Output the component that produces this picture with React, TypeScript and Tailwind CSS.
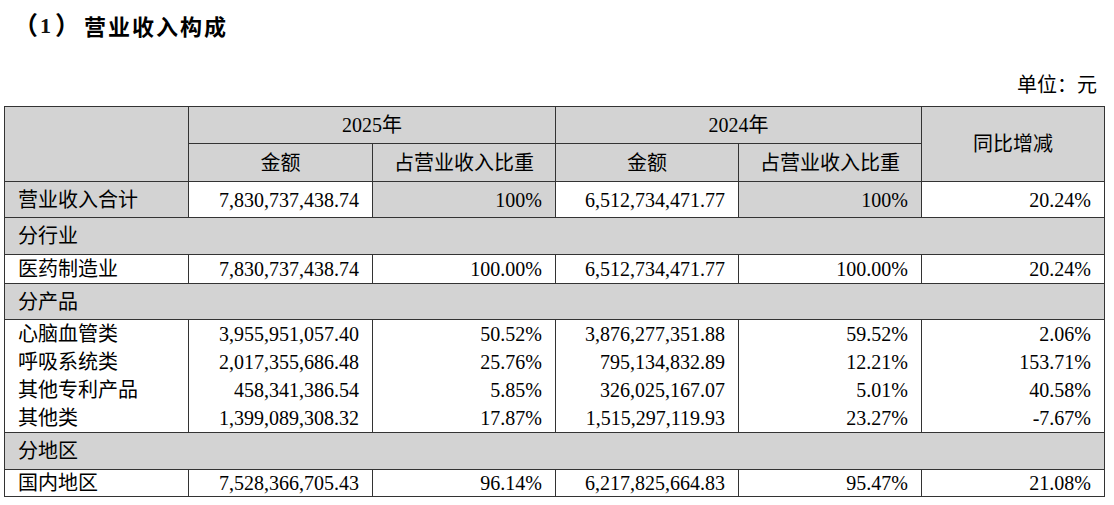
const serif = "font-['Liberation_Serif','Noto_Sans_CJK_SC',serif]";

const cell = "border-x border-[#333] px-[13px] py-0 leading-none whitespace-nowrap";

type DataRow = {
  label: string;
  a: string;
  ap: string;
  b: string;
  bp: string;
  yoy: string;
  h: string;
  top?: boolean;
};

type Row = { section: string; h: string } | DataRow;

const rows: Row[] = [
  { section: "分行业", h: "h-[37px]" },
  { label: "医药制造业", a: "7,830,737,438.74", ap: "100.00%", b: "6,512,734,471.77", bp: "100.00%", yoy: "20.24%", h: "h-[29px]", top: true },
  { section: "分产品", h: "h-[36px]" },
  { label: "心脑血管类", a: "3,955,951,057.40", ap: "50.52%", b: "3,876,277,351.88", bp: "59.52%", yoy: "2.06%", h: "h-[28px]", top: true },
  { label: "呼吸系统类", a: "2,017,355,686.48", ap: "25.76%", b: "795,134,832.89", bp: "12.21%", yoy: "153.71%", h: "h-[28px]" },
  { label: "其他专利产品", a: "458,341,386.54", ap: "5.85%", b: "326,025,167.07", bp: "5.01%", yoy: "40.58%", h: "h-[28px]" },
  { label: "其他类", a: "1,399,089,308.32", ap: "17.87%", b: "1,515,297,119.93", bp: "23.27%", yoy: "-7.67%", h: "h-[29px]" },
  { section: "分地区", h: "h-[37px]" },
  { label: "国内地区", a: "7,528,366,705.43", ap: "96.14%", b: "6,217,825,664.83", bp: "95.47%", yoy: "21.08%", h: "h-[27px]", top: true },
];

export default function App() {
  return (
    <div className={`w-[1114px] h-[505px] bg-white text-black ${serif}`}>
      <div className="h-[50px] flex items-center pl-[13px] text-[22px] font-bold font-['Noto_Sans_CJK_SC',sans-serif]">
        <span className="text-[25px]">（</span>
        <span className="ml-[2px] font-['Liberation_Serif',serif] text-[#111]">1</span>
        <span className="ml-[4px] text-[25px]">）</span>
        <span className="ml-[4px] tracking-[2px]">营业收入构成</span>
      </div>
      <div className="h-[56px] flex items-end justify-end pr-[17px] pb-[6px] text-[20px]">
        单位：元
      </div>
      <table className="ml-[4px] w-[1100px] table-fixed border-collapse border border-[#333] text-[20px]">
        <colgroup>
          <col className="w-[184px]" />
          <col className="w-[184px]" />
          <col className="w-[183px]" />
          <col className="w-[183px]" />
          <col className="w-[183px]" />
          <col className="w-[183px]" />
        </colgroup>
        <thead>
          <tr className="h-[37px] bg-[#d3d3d3]">
            <td rowSpan={2} className={`${cell} border-y`}></td>
            <td colSpan={2} className={`${cell} border-y text-center`}>2025年</td>
            <td colSpan={2} className={`${cell} border-y text-center`}>2024年</td>
            <td rowSpan={2} className={`${cell} border-y text-center`}>同比增减</td>
          </tr>
          <tr className="h-[38px] bg-[#d3d3d3]">
            <td className={`${cell} border-y text-center`}>金额</td>
            <td className={`${cell} border-y text-center`}>占营业收入比重</td>
            <td className={`${cell} border-y text-center`}>金额</td>
            <td className={`${cell} border-y text-center`}>占营业收入比重</td>
          </tr>
        </thead>
        <tbody>
          <tr className="h-[36px]">
            <td className={`${cell} border-y bg-[#d3d3d3]`}>营业收入合计</td>
            <td className={`${cell} border-y bg-white text-right`}>7,830,737,438.74</td>
            <td className={`${cell} border-y bg-[#d3d3d3] text-right`}>100%</td>
            <td className={`${cell} border-y bg-white text-right`}>6,512,734,471.77</td>
            <td className={`${cell} border-y bg-[#d3d3d3] text-right`}>100%</td>
            <td className={`${cell} border-y bg-white text-right`}>20.24%</td>
          </tr>
          {rows.map((r, i) =>
            "section" in r ? (
              <tr key={i} className={`${r.h} bg-[#d3d3d3]`}>
                <td colSpan={6} className={`${cell} border-y`}>{r.section}</td>
              </tr>
            ) : (
              <tr key={i} className={r.h}>
                <td className={`${cell} ${r.top ? "border-t" : ""}`}>{r.label}</td>
                <td className={`${cell} ${r.top ? "border-t" : ""} text-right`}>{r.a}</td>
                <td className={`${cell} ${r.top ? "border-t" : ""} text-right`}>{r.ap}</td>
                <td className={`${cell} ${r.top ? "border-t" : ""} text-right`}>{r.b}</td>
                <td className={`${cell} ${r.top ? "border-t" : ""} text-right`}>{r.bp}</td>
                <td className={`${cell} ${r.top ? "border-t" : ""} text-right`}>{r.yoy}</td>
              </tr>
            )
          )}
        </tbody>
      </table>
    </div>
  );
}
